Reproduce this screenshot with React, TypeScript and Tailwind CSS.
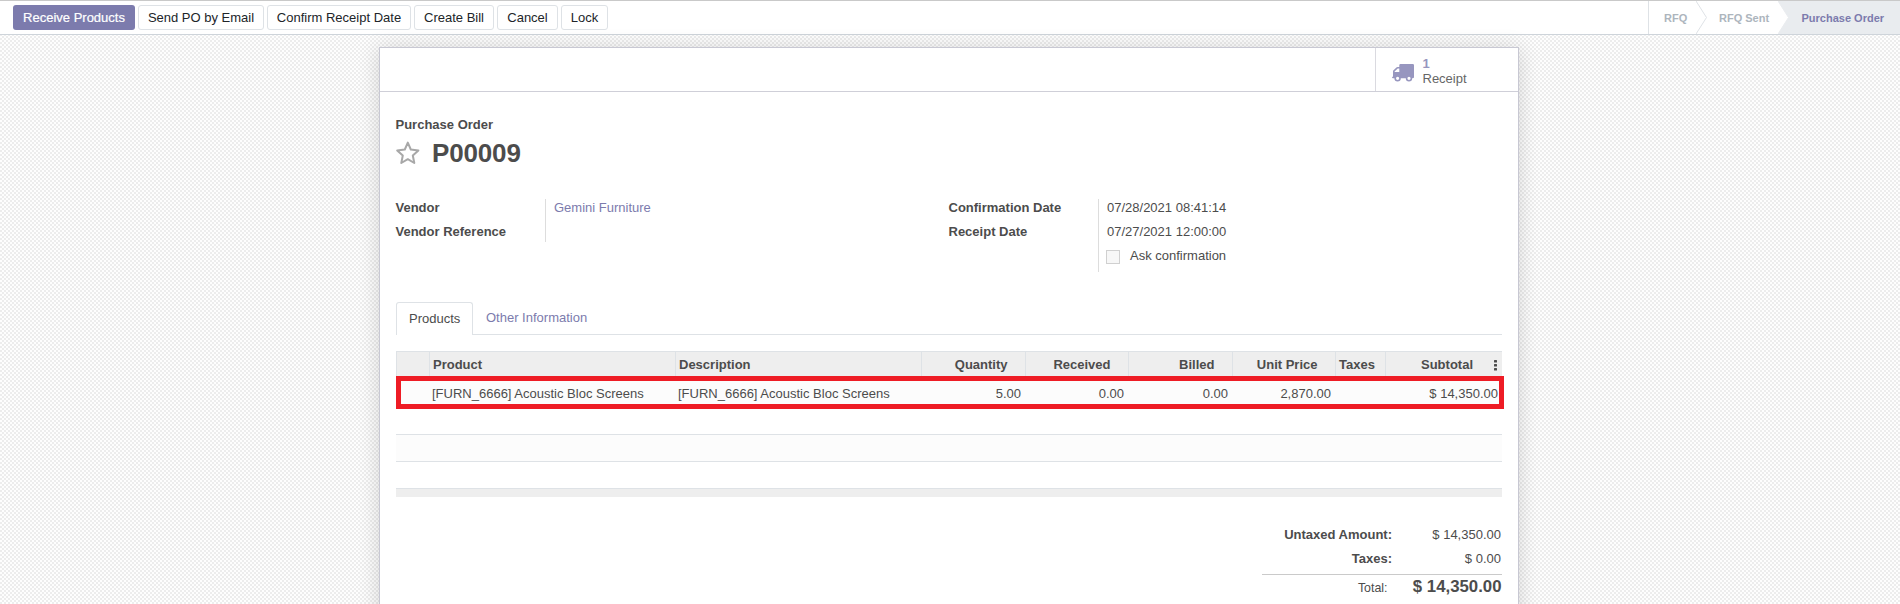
import React from "react";

const actions: { label: string; width: string }[] = [
  { label: "Send PO by Email", width: "w-[126px]" },
  { label: "Confirm Receipt Date", width: "w-[144px]" },
  { label: "Create Bill", width: "w-[80px]" },
  { label: "Cancel", width: "w-[61px]" },
  { label: "Lock", width: "w-[47px]" },
];

function ActionBar() {
  return (
    <header className="flex h-[35px] shrink-0 justify-between border-t border-b border-t-[#c9c9c9] border-b-[#ced4da] bg-white">
      <div className="flex gap-[3px] pt-1 pl-[13px]">
        <button className="h-[25px] w-[122px] rounded-[3px] bg-[#7c7bad] text-center whitespace-nowrap text-white [-webkit-text-stroke:0.2px_white]">
          Receive Products
        </button>
        {actions.map((a) => (
          <button
            key={a.label}
            className={`${a.width} h-[25px] rounded-[3px] border border-[#dee2e6] bg-white text-center whitespace-nowrap text-[#212529]`}
          >
            {a.label}
          </button>
        ))}
      </div>
      <div className="flex border-l border-[#dee2e6] text-[11px] leading-[34px] font-bold whitespace-nowrap text-[#adb5bd]">
        <span className="w-[47px] pl-[15px]">RFQ</span>
        <Arrow />
        <span className="w-[71px] pl-[12px]">RFQ Sent</span>
        <Arrow active />
        <span className="w-[111px] bg-[#e9ecef] pl-[12.5px] text-[#7c7bad]">Purchase Order</span>
      </div>
    </header>
  );
}

function Arrow({ active = false }: { active?: boolean }) {
  return (
    <svg width="11" height="33" viewBox="0 0 11 33" className={active ? "shrink-0 bg-[#e9ecef]" : "shrink-0"}>
      <path d="M0 0 L10.5 16.5 L0 33" fill="#ffffff" stroke={active ? "#e9ecef" : "#dee2e6"} strokeWidth="1" />
    </svg>
  );
}

function Label({ children }: { children: React.ReactNode }) {
  return <div className="h-6 font-bold">{children}</div>;
}

function Details() {
  return (
    <section className="mt-[31px] flex h-[74px] items-start leading-[18px] text-[#4c4c4c]">
      <div className="-ml-[0.5px] w-[149.5px]">
        <Label>Vendor</Label>
        <Label>Vendor Reference</Label>
      </div>
      <div className="h-[43px] w-[403.5px] border-l border-[#dddddd] pl-2 text-[#7c7bad]">Gemini Furniture</div>
      <div className="w-[149.5px]">
        <Label>Confirmation Date</Label>
        <Label>Receipt Date</Label>
      </div>
      <div className="h-[73px] border-l border-[#dddddd] pl-2">
        <div className="h-6">07/28/2021 08:41:14</div>
        <div className="h-6">07/27/2021 12:00:00</div>
        <div className="-ml-px flex items-center">
          <span className="mt-0.5 mr-[10px] h-[14px] w-[14px] border border-[#d0d0d0] bg-[#f7f7f7]" />
          Ask confirmation
        </div>
      </div>
    </section>
  );
}

const grid = "grid grid-cols-[33px_246px_246px_104px_103px_104px_103px_50px_117px]";
const head = "border-l border-[#dee2e6] pl-[3px]";
const headNum = "border-l border-[#dee2e6] pr-[17.5px] text-right";

function Lines() {
  return (
    <section className="relative mt-4 w-[1106px] text-[#4c4c4c]">
      <div className={`${grid} h-[26px] border-t border-[#dee2e6] bg-[#eeeeee] leading-[25px] font-bold`}>
        <div className={head} />
        <div className={head}>Product</div>
        <div className={head}>Description</div>
        <div className={headNum}>Quantity</div>
        <div className={headNum}>Received</div>
        <div className={headNum}>Billed</div>
        <div className={headNum}>Unit Price</div>
        <div className={head}>Taxes</div>
        <div className="flex justify-end border-l border-[#dee2e6] pr-[5px]">
          Subtotal
          <svg width="3" height="11" viewBox="0 0 3 11" className="mt-2 ml-[21px]" fill="#4c4c4c">
            <rect y="0" width="3" height="2.6" rx="0.5" />
            <rect y="4" width="3" height="2.6" rx="0.5" />
            <rect y="8" width="3" height="2.6" rx="0.5" />
          </svg>
        </div>
      </div>
      <div className={`${grid} h-[31px] bg-[#fcfcfc] pt-[1px] text-right leading-[31px] whitespace-nowrap`}>
        <div />
        <div className="pl-[3px] text-left">[FURN_6666] Acoustic Bloc Screens</div>
        <div className="pl-[3px] text-left">[FURN_6666] Acoustic Bloc Screens</div>
        <div className="pr-1">5.00</div>
        <div className="pr-1">0.00</div>
        <div className="pr-1">0.00</div>
        <div className="pr-1">2,870.00</div>
        <div />
        <div className="pr-1">$ 14,350.00</div>
      </div>
      <div className="h-[27px] border-b border-[#dee2e6] bg-white" />
      <div className="h-[27px] border-b border-[#dee2e6] bg-[#fcfcfc]" />
      <div className="h-[27px] border-b border-[#dee2e6]" />
      <div className="h-2 bg-[#eeeeee]" />
      <div className="absolute top-[25px] left-0 h-[33px] w-[1108px] border-[5px] border-[#ee1c25]" />
    </section>
  );
}

function Totals() {
  return (
    <section className="mt-[30px] ml-[866px] w-[240px] text-right leading-4 whitespace-nowrap text-[#4c4c4c]">
      <div className="flex h-6 justify-end pr-px">
        <span className="font-bold">Untaxed Amount:</span>
        <span className="w-[109px]">$ 14,350.00</span>
      </div>
      <div className="flex h-[23px] justify-end pr-px">
        <span className="font-bold">Taxes:</span>
        <span className="w-[109px]">$ 0.00</span>
      </div>
      <div className="flex items-baseline justify-end border-t border-[#cacaca] pt-1 pr-[0.5px]">
        <span className="text-[12.4px]">Total:</span>
        <span className="w-[114px] text-[16.8px] font-bold">$ 14,350.00</span>
      </div>
    </section>
  );
}

export default function App() {
  return (
    <div className="flex h-[604px] w-[1900px] flex-col overflow-hidden bg-[conic-gradient(#ededed_25%,#fefefe_0_50%,#ededed_0_75%,#fefefe_0)] bg-[size:4px_4px] font-['Liberation_Sans',Arial,sans-serif] text-[13px]">
      <ActionBar />
      <main className="mt-3 ml-[379px] h-[640px] w-[1140px] shrink-0 border border-[#c8c8d3] bg-white shadow-[0_2px_20px_rgba(0,0,0,0.16)]">
        <div className="flex h-11 justify-end border-b border-[#cfcfd8]">
          <div className="flex w-[143px] border-l border-[#dadae0] pl-4">
            <svg width="22" height="18" viewBox="0 0 22 18" className="mt-4 shrink-0" fill="#9796bf">
              <path
                fillRule="evenodd"
                d="M8.5 0H20.8Q22 0 22 1.2V13.2Q22 14.3 20.2 14.3A3.2 3.2 0 0 1 13.8 14.3H8.8A3.2 3.2 0 0 1 2.4 14.3H1Q0 14.3 0 13.3Q1 13 1 12V7.5Q1 6.8 1.5 6.3L4.4 3.4Q4.9 2.9 5.6 2.9H7.3V1.2Q7.3 0 8.5 0ZM2.6 7.9H7.3V4.5H5.7L2.6 7.5ZM5.6 12.7A1.6 1.6 0 1 0 5.6 15.9A1.6 1.6 0 1 0 5.6 12.7ZM17 12.7A1.6 1.6 0 1 0 17 15.9A1.6 1.6 0 1 0 17 12.7Z"
              />
            </svg>
            <div className="mt-2 ml-[8.5px] leading-[15px] text-[#666666]">
              <div className="font-bold text-[#9796bf]">1</div>
              <div>Receipt</div>
            </div>
          </div>
        </div>
        <div className="pl-4">
          <div className="mt-[25px] -ml-[0.5px] leading-4 font-bold text-[#4c4c4c]">Purchase Order</div>
          <h1 className="mt-[5px] -ml-px flex h-[30px] items-center text-[26px] leading-[30px] font-bold text-[#4c4c4c]">
            <svg width="25" height="24" viewBox="0 0 25 24" className="mr-3 shrink-0" fill="none" stroke="#a8a8a8" strokeWidth="2" strokeLinejoin="round">
              <path d="M12.8 1.6L15.8 8.5L23.4 9.4L17.8 14.5L19.3 22L12.8 18.2L6.3 22L7.8 14.5L2.2 9.4L9.8 8.5Z" />
            </svg>
            <span className="tracking-[-0.15px]">P00009</span>
          </h1>
          <Details />
          <nav className="mt-[29px] flex h-[33px] w-[1106px] border-b border-[#dee2e6] leading-[32px]">
            <span className="h-[33px] w-[77px] rounded-t-[3px] border border-b-0 border-[#dee2e6] bg-white pl-3 leading-[31px] text-[#4c4c4c]">Products</span>
            <span className="pl-[13px] text-[#7c7bad]">Other Information</span>
          </nav>
          <Lines />
          <Totals />
        </div>
      </main>
    </div>
  );
}
